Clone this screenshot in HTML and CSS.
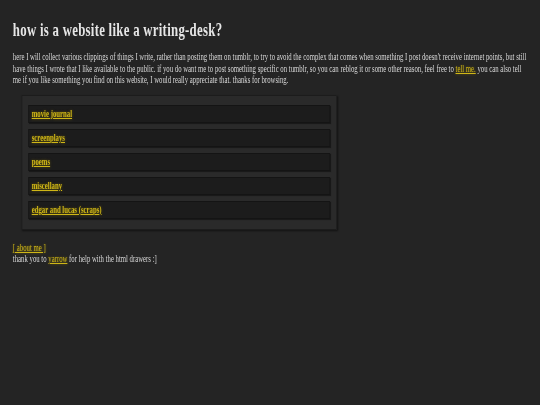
FILE: index.html
```html
<!DOCTYPE html>
<html>

<head>
    <meta charset="utf-8" />
    <title>writing-desk</title>
    <link rel="stylesheet" href="styles.css">
</head>

<body>
    <div class="page">
        <h1 class="title">how is a website like a writing-desk?</h1>

        <p class="intro">here I will collect various clippings of things I write, rather than posting them on tumblr, to try to avoid the complex that comes when something I post doesn't receive internet points, but still have things I wrote that I like available to the public. if you do want me to post something specific on tumblr, so you can reblog it or some other reason, feel free to <a href="#">tell me.</a> you can also tell me if you like something you find on this website, I would really appreciate that. thanks for browsing.</p>

        <div class="drawers">
            <div class="drawer"><a href="#">movie journal</a></div>
            <div class="drawer"><a href="#">screenplays</a></div>
            <div class="drawer"><a href="#">poems</a></div>
            <div class="drawer"><a href="#">miscellany</a></div>
            <div class="drawer"><a href="#">edgar and lucas (scraps)</a></div>
        </div>

        <div class="footer">
            <a href="#">[ about me ]</a><br>
            thank you to <a href="#">yarrow</a> for help with the html drawers :]
        </div>
    </div>
</body>

</html>
```

FILE: styles.css
```css
html,
body {
    margin: 0;
    height: 100%;
    overflow: hidden;
    background-color: #242424;
}

.page {
    width: 800px;
    padding: 16px 18px 0 19px;
    box-sizing: border-box;
    transform: scaleX(0.675);
    transform-origin: 0 0;
    font-family: "Liberation Serif", "Times New Roman", serif;
    color: #d8d8d8;
}

a {
    color: #cfb617;
    text-shadow: 0 0 3px rgba(160, 140, 0, 0.6);
}

.title {
    margin: 0;
    font-size: 19px;
    line-height: 28px;
    letter-spacing: 0.4px;
    color: #e6e6e6;
}

.intro {
    margin: 7px 0 0 0;
    font-size: 10px;
    line-height: 11.5px;
}

.drawers {
    width: 467px;
    box-sizing: border-box;
    margin: 9px 0 0 13px;
    padding: 9px 9px 10px 9px;
    background-color: #2a2a2a;
    border: 1px solid #1c1c1c;
    box-shadow: 1px 1px 2px rgba(0, 0, 0, 0.5);
    display: flex;
    flex-direction: column;
    gap: 6px;
}

.drawer {
    height: 16px;
    padding: 0 4px;
    display: flex;
    align-items: center;
    background-color: #1c1c1c;
    border: 1px solid #141414;
    box-shadow: 1px 1px 1px rgba(0, 0, 0, 0.4);
    font-size: 10px;
    font-weight: bold;
}

.footer {
    margin-top: 12px;
    font-size: 10px;
    line-height: 11.5px;
}
```
